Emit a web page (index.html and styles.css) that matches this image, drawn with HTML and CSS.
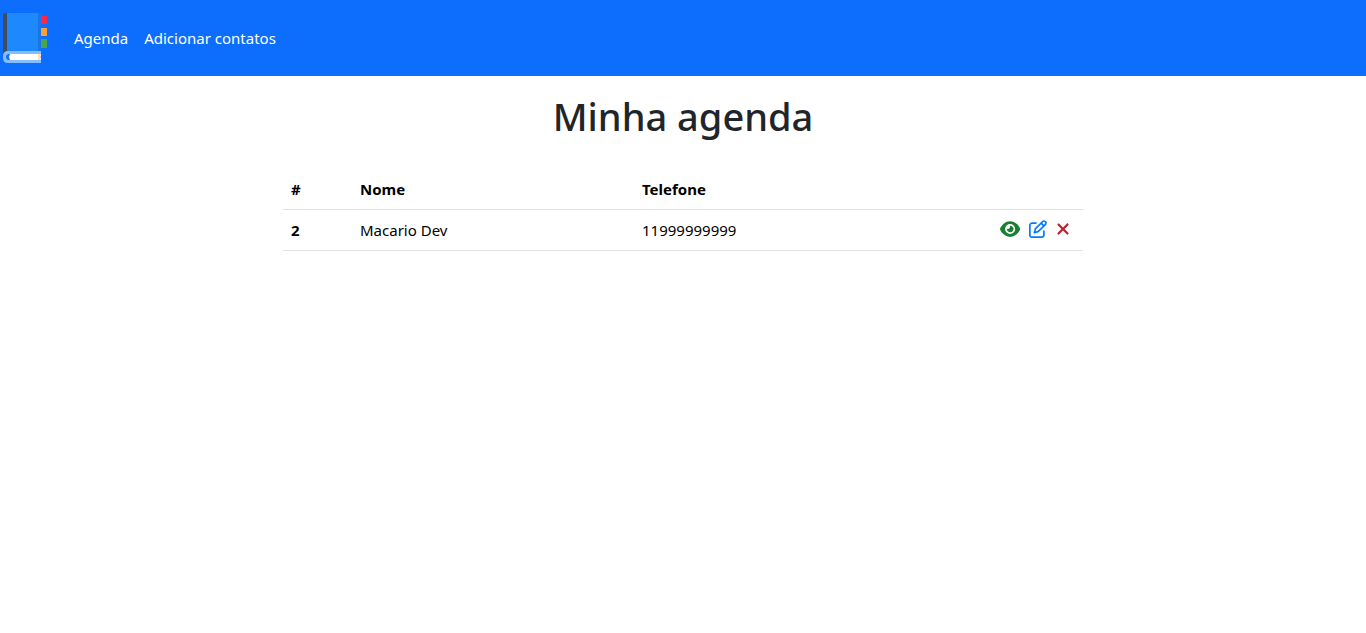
FILE: index.html
```html
<!DOCTYPE html>
<html lang="pt-BR">
<head>
<meta charset="utf-8">
<meta name="viewport" content="width=device-width, initial-scale=1">
<title>Minha agenda</title>
<link rel="stylesheet" href="styles.css">
</head>
<body>
<header>
  <nav class="navbar">
    <a class="brand" href="#" aria-label="Agenda">
      <svg class="logo" viewBox="0 0 50 60" aria-hidden="true">
        <path fill="#f8274c" d="M41 8h6v8h-6z"/>
        <path fill="#ff9f32" d="M41 20h6v8h-6z"/>
        <path fill="#4ba446" d="M41 31h6v9h-6z"/>
        <path fill="#434d5a" d="M6 5h2v42H3V8q0-3 3-3z"/>
        <path fill="#1e88ff" d="M7 5h31v40H7z"/>
        <path fill="#1976e8" d="M38 5h3v40h-3z"/>
        <path fill="#86bdff" d="M8 43h33v12H8q-5 0-5-5v-2q0-5 5-5z"/>
        <path fill="#1473e6" d="M9 46h4v6H9q-3 0-3-3t3-3z"/>
        <path fill="#fff" d="M10 46h31v1l-1 2 1 2v1H10l-1-3z"/>
        <path fill="#ffe0b2" d="M38 46h3l-1 3 1 3h-3z"/>
      </svg>
    </a>
    <a class="nav-link" href="#">Agenda</a>
    <a class="nav-link" href="#">Adicionar contatos</a>
  </nav>
</header>
<main class="container">
  <h1 class="title">Minha agenda</h1>
  <table class="contacts">
    <thead>
      <tr>
        <th class="col-id" scope="col">#</th>
        <th class="col-name" scope="col">Nome</th>
        <th class="col-phone" scope="col">Telefone</th>
        <th scope="col"></th>
      </tr>
    </thead>
    <tbody>
      <tr>
        <th scope="row">2</th>
        <td>Macario Dev</td>
        <td>11999999999</td>
        <td>
          <div class="actions">
            <a class="action view" href="#" aria-label="Ver contato"><svg viewBox="0 0 576 512" aria-hidden="true"><path d="M288 32c-80.800 0-145.500 36.800-192.600 80.600C48.600 156 17.300 208 2.500 243.700c-3.300 7.900-3.300 16.700 0 24.600C17.300 304 48.600 356 95.400 399.400C142.500 443.200 207.200 480 288 480s145.500-36.800 192.600-80.600c46.800-43.500 78.100-95.400 93-131.100c3.300-7.900 3.300-16.700 0-24.600c-14.900-35.700-46.200-87.700-93-131.100C433.500 68.800 368.800 32 288 32zM144 256a144 144 0 1 1 288 0 144 144 0 1 1 -288 0zm144-64c0 35.300-28.700 64-64 64c-7.100 0-13.900-1.200-20.300-3.300c-5.500-1.800-11.900 1.600-11.700 7.400c.3 6.900 1.300 13.800 3.200 20.700c13.700 51.200 66.400 81.600 117.600 67.900s81.600-66.400 67.900-117.600c-11.100-41.500-47.800-69.400-88.600-71.100c-5.800-.2-9.200 6.100-7.400 11.700c2.100 6.400 3.300 13.200 3.300 20.300z"/></svg></a>
            <a class="action edit" href="#" aria-label="Editar contato"><svg viewBox="0 0 512 512" aria-hidden="true"><path d="M441 58.900L453.100 71c9.400 9.400 9.400 24.600 0 33.900L424 134.100 377.900 88 407 58.900c9.400-9.400 24.600-9.400 33.900 0zM209.800 256.200L344 121.900 390.100 168 255.800 302.200c-2.900 2.900-6.500 5-10.400 6.100l-58.500 16.700 16.700-58.500c1.100-3.900 3.200-7.500 6.100-10.400zM373.100 25L175.800 222.200c-8.700 8.700-15 19.400-18.300 31.100l-28.600 100c-2.400 8.400-.1 17.400 6.100 23.600s15.200 8.500 23.600 6.100l100-28.600c11.800-3.400 22.500-9.700 31.100-18.300L487 138.900c28.100-28.100 28.100-73.700 0-101.800L474.900 25C446.800-3.100 401.200-3.100 373.100 25zM88 64C39.400 64 0 103.400 0 152V424c0 48.600 39.400 88 88 88H360c48.600 0 88-39.400 88-88V312c0-13.300-10.700-24-24-24s-24 10.700-24 24V424c0 22.100-17.900 40-40 40H88c-22.100 0-40-17.900-40-40V152c0-22.100 17.900-40 40-40H200c13.300 0 24-10.700 24-24s-10.700-24-24-24H88z"/></svg></a>
            <button class="action delete" type="button" aria-label="Excluir contato"><svg viewBox="0 0 384 512" aria-hidden="true"><path d="M342.600 150.600c12.500-12.500 12.500-32.800 0-45.300s-32.800-12.500-45.300 0L192 210.700 86.600 105.400c-12.500-12.500-32.800-12.500-45.300 0s-12.500 32.800 0 45.300L146.700 256 41.400 361.400c-12.500 12.500-12.500 32.800 0 45.300s32.800 12.500 45.300 0L192 301.300 297.400 406.600c12.500 12.500 32.800 12.500 45.300 0s12.500-32.800 0-45.300L237.300 256 342.600 150.600z"/></svg></button>
          </div>
        </td>
      </tr>
    </tbody>
  </table>
</main>
</body>
</html>
```
FILE: styles.css
```css
* { box-sizing: border-box; }
body {
  margin: 0;
  background: #fff;
  color: #212529;
  font-family: "Segoe UI", "Noto Sans", sans-serif;
  font-size: 15px;
  line-height: 24px;
}
.navbar {
  display: flex;
  align-items: center;
  padding: 8px 0;
  background: #0d6efd;
}
.brand { display: flex; margin-right: 16px; }
.logo { width: 50px; height: 60px; }
.nav-link { padding: 8px; color: #fff; text-decoration: none; }
.container {
  width: 100%;
  max-width: 800px;
  margin: 0 auto;
}
.title {
  margin: 16px 0 29px;
  color: #212529;
  font-size: 38px;
  font-weight: 500;
  line-height: 48px;
  text-align: center;
}
.contacts {
  width: 100%;
  table-layout: fixed;
  border-collapse: collapse;
  color: #000;
}
.contacts th, .contacts td {
  padding: 8px;
  border-bottom: 1px solid #dee2e6;
  text-align: left;
  vertical-align: top;
}
.contacts th { font-weight: 700; }
.col-id { width: 69px; }
.col-name { width: 282px; }
.col-phone { width: 282px; }
.actions {
  display: flex;
  align-items: center;
  justify-content: flex-end;
  gap: 8px;
  height: 24px;
  padding: 0 5px 2px 0;
}
.action {
  display: flex;
  padding: 0;
  border: 0;
  background: none;
  cursor: pointer;
}
.action svg { height: 18px; fill: currentColor; }
.delete svg { width: 14px; height: 18px; }
.actions { gap: 9px; }
.view { color: #198030; }
.edit { color: #007bff; }
.delete { color: #bd2130; }
```
